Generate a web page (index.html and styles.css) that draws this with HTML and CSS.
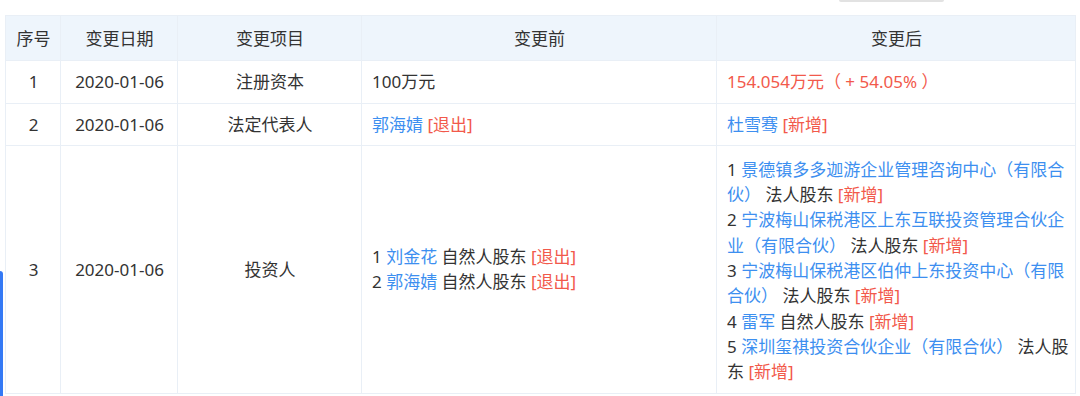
FILE: index.html
```html
<!DOCTYPE html>
<html lang="zh-CN">
<head>
<meta charset="utf-8">
<title>变更记录</title>
<link rel="stylesheet" href="styles.css">
</head>
<body>
<div class="page">
  <div class="topstrip"><span class="tab-edge"></span></div>
  <table class="changes">
    <colgroup>
      <col class="c-no">
      <col class="c-date">
      <col class="c-item">
      <col class="c-before">
      <col class="c-after">
    </colgroup>
    <thead>
      <tr>
        <th>序号</th>
        <th>变更日期</th>
        <th>变更项目</th>
        <th>变更前</th>
        <th>变更后</th>
      </tr>
    </thead>
    <tbody>
      <tr>
        <td class="center">1</td>
        <td class="center">2020-01-06</td>
        <td class="center">注册资本</td>
        <td>100万元</td>
        <td class="after"><span class="red">154.054万元（ + 54.05% ）</span></td>
      </tr>
      <tr>
        <td class="center">2</td>
        <td class="center">2020-01-06</td>
        <td class="center">法定代表人</td>
        <td><span class="blue">郭海婧</span> <span class="red">[退出]</span></td>
        <td class="after"><span class="blue">杜雪骞</span> <span class="red">[新增]</span></td>
      </tr>
      <tr>
        <td class="center">3</td>
        <td class="center">2020-01-06</td>
        <td class="center">投资人</td>
        <td>
          <div>1 <span class="blue">刘金花</span> 自然人股东 <span class="red">[退出]</span></div>
          <div>2 <span class="blue">郭海婧</span> 自然人股东 <span class="red">[退出]</span></div>
        </td>
        <td class="after tall">
          <div>1 <span class="blue">景德镇多多迦游企业管理咨询中心（有限合伙）</span> 法人股东 <span class="red">[新增]</span></div>
          <div>2 <span class="blue">宁波梅山保税港区上东互联投资管理合伙企业（有限合伙）</span> 法人股东 <span class="red">[新增]</span></div>
          <div>3 <span class="blue">宁波梅山保税港区伯仲上东投资中心（有限合伙）</span> 法人股东 <span class="red">[新增]</span></div>
          <div>4 <span class="blue">雷军</span> 自然人股东 <span class="red">[新增]</span></div>
          <div>5 <span class="blue">深圳玺祺投资合伙企业（有限合伙）</span> 法人股东 <span class="red">[新增]</span></div>
        </td>
      </tr>
    </tbody>
  </table>
  <span class="side-tab"></span>
</div>
</body>
</html>
```

FILE: styles.css
```css
html, body {
  margin: 0;
  padding: 0;
  background: #fff;
}

.page {
  position: relative;
  width: 1080px;
  height: 396px;
  overflow: hidden;
  font-family: "Noto Sans", "Noto Sans CJK SC", sans-serif;
  font-size: 17px;
  color: #333;
}

.topstrip {
  height: 15px;
  display: flex;
}

.tab-edge {
  display: block;
  margin-left: 839px;
  width: 105px;
  height: 2px;
  background: #e2e2e2;
  border-radius: 0 0 2px 2px;
}

.changes {
  margin-left: 5px;
  width: 1070px;
  table-layout: fixed;
  border-collapse: collapse;
}

.c-no { width: 55px; }
.c-date { width: 117px; }
.c-item { width: 184px; }
.c-before { width: 355px; }
.c-after { width: 359px; }

.changes th,
.changes td {
  border: 1px solid #e9eff6;
  line-height: 25.3px;
  padding: 8px 9px 8px 10px;
  vertical-align: middle;
  text-align: left;
  font-weight: normal;
}

.changes th {
  background: #eef5fc;
  text-align: center;
  padding-top: 10px;
  padding-bottom: 9px;
}

.changes td.center {
  text-align: center;
}

.changes td.after {
  padding-right: 4px;
}

.changes td.tall {
  padding-top: 11px;
  padding-bottom: 8px;
}

.blue { color: #3d8ff0; }
.red { color: #f2594b; }

.side-tab {
  position: absolute;
  left: 0;
  top: 271px;
  width: 3px;
  height: 130px;
  background: #3479f5;
  border-radius: 0 3px 0 0;
}
```
